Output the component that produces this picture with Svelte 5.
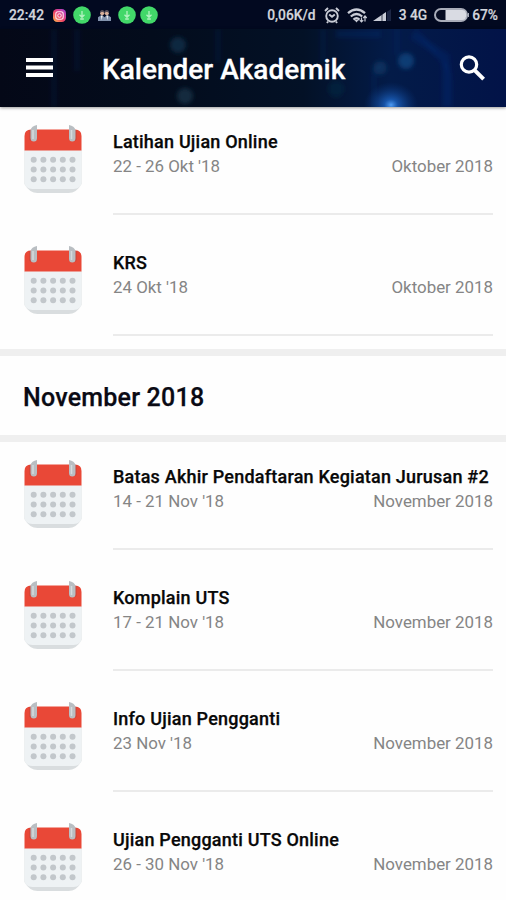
<script>
  const october = [
    { title: "Latihan Ujian Online", date: "22 - 26 Okt '18", month: "Oktober 2018" },
    { title: "KRS", date: "24 Okt '18", month: "Oktober 2018" },
  ];

  const november = [
    { title: "Batas Akhir Pendaftaran Kegiatan Jurusan #2", date: "14 - 21 Nov '18", month: "November 2018" },
    { title: "Komplain UTS", date: "17 - 21 Nov '18", month: "November 2018" },
    { title: "Info Ujian Pengganti", date: "23 Nov '18", month: "November 2018" },
    { title: "Ujian Pengganti UTS Online", date: "26 - 30 Nov '18", month: "November 2018" },
  ];

  const columns = [10.7, 20.4, 30.1, 39.8, 49.5];
  const lines = [34.8, 44.5, 54.2];
</script>

{#snippet download()}
  <svg class="download" width="18" height="18" viewBox="0 0 18 18">
    <circle cx="9" cy="9" r="8.8" fill="#42d869" />
    <path d="M9 5v6M6.5 8.8 9 11.3l2.5-2.5M7.2 13h3.6" fill="none" stroke="#b4f3c2" stroke-width="1.3" />
  </svg>
{/snippet}

{#snippet event(item)}
  <li class="event">
    <svg class="calendar" width="60" height="70" viewBox="0 0 60 70">
      <path d="M1.5 25h57v34q-5 9-13 9h-31q-8 0-13-9z" fill="#d9dddf" />
      <path d="M1.5 25h57v31q0 8-8 8h-41q-8 0-8-8z" fill="#eef2f4" />
      <path d="M1.5 25.5V11q0-6.5 6.5-6.5h44q6.5 0 6.500 6.5v14.5z" fill="#e94837" />
      <path d="M6.500 5h7v10q-3.500 2-7 0zM46.500 5h7v10q-3.500 2-7 0z" fill="#c5453b" />
      <path d="M7.500 5q1-4 6.500-5v13q0 3.500-3.200 3.500T7.500 13zM46 0q5.500 1 6.500 5v8q0 3.500-3.200 3.500T46 13z" fill="#b9bec2" />
      <path d="M10 5v9M48.500 5v9" stroke="#d5dadd" stroke-width="1.500" />
      {#each lines as y}
        {#each columns as x}
          <circle cx={x} cy={y} r="3" fill="#c2c7cb" />
        {/each}
      {/each}
    </svg>
    <div class="info">
      <h3>{item.title}</h3>
      <div class="meta">
        <span>{item.date}</span>
        <span>{item.month}</span>
      </div>
    </div>
  </li>
{/snippet}

<div class="screen">
  <div class="status">
    <span class="clock">22:42</span>
    <div class="notifications">
      <svg width="13" height="13" viewBox="0 0 14 14">
        <defs>
          <linearGradient id="insta" x1="0" y1="1" x2="1" y2="0">
            <stop offset="0" stop-color="#ffc04d" />
            <stop offset=".45" stop-color="#ee3e68" />
            <stop offset="1" stop-color="#a043dc" />
          </linearGradient>
        </defs>
        <rect width="14" height="14" rx="4.5" fill="url(#insta)" />
        <rect x="3" y="3" width="8" height="8" rx="2.3" fill="none" stroke="#ffe4ed" stroke-width="1.2" />
        <circle cx="7" cy="7" r="1.9" fill="none" stroke="#ffe4ed" stroke-width="1.1" />
      </svg>
      {@render download()}
      <svg class="people" width="13" height="13" viewBox="0 0 14 14">
        <path d="M0 13V9l3-2h2l2 2 2-2h2l3 2v4z" fill="#8292ad" />
        <path d="M3 7h2l-1 5zM9 7h2l-1 5z" fill="#f2f2f2" />
        <circle cx="4.5" cy="4.5" r="2.2" fill="#d9b09a" />
        <circle cx="9.5" cy="4.5" r="2.2" fill="#d9b09a" />
        <path d="M2.2 4q0-3 2.3-3t2.5 3L4.5 3zM7 4q0-3 2.5-3t2.3 3L9.5 3z" fill="#59505a" />
      </svg>
      {@render download()}
      {@render download()}
    </div>
    <span class="speed">0,06K/d</span>
    <svg class="alarm" width="16" height="17" viewBox="0 0 16 17" fill="none" stroke="#c9ccd6" stroke-width="1.9">
      <circle cx="8" cy="9" r="5.8" />
      <path d="m1 4 3-3M15 4l-3-3M5.2 7.5 8 9.8l2.8-2.3M4 14.5 3 16M12 14.5l1 1.5" />
    </svg>
    <svg class="wifi" width="21" height="15" viewBox="0 0 21 15" fill="none" stroke="#c9ccd6">
      <path d="M1 5.2q8.500-7.500 17 0M3.800 8.500q5.700-5 11.400 0M6.500 11.600q3-2.600 6 0" stroke-width="2.300" />
      <path d="m7.500 12 2 2.500 2-2.500z" fill="#c9ccd6" stroke="none" />
      <path d="M14.500 14V9.500m-1.700 2.700 1.700 1.800 1.700-1.800M18 13.500V8m-1.700 2L18 8l1.700 2" stroke-width="1.200" />
    </svg>
    <svg class="signal" width="18" height="13" viewBox="0 0 18 13">
      <path d="M14 2.700 18 0v12h-4z" fill="#1c2644" />
      <path d="M0 12 13 3V12z" fill="#c9ccd6" />
      <path d="M9 3v9" stroke="#020920" stroke-width=".7" />
    </svg>
    <span class="network">3 4G</span>
    <svg class="battery" width="35" height="14" viewBox="0 0 35 14">
      <rect x="1" y="1" width="32" height="12" rx="6" fill="#070d22" stroke="#a9adb9" stroke-width="2" />
      <path d="M11.500 2h17q3.700 0 3.700 5t-3.700 5h-17z" fill="#d9dbe3" />
      <path d="M34.400 5v4" stroke="#a9adb9" stroke-width="1.200" />
    </svg>
    <span class="percent">67%</span>
  </div>

  <header>
    <svg class="backdrop" viewBox="0 0 506 78" preserveAspectRatio="none">
      <defs>
        <linearGradient id="night">
          <stop offset="0" stop-color="#040817" />
          <stop offset=".3" stop-color="#030c1c" />
          <stop offset=".6" stop-color="#031126" />
          <stop offset=".77" stop-color="#031b48" />
          <stop offset="1" stop-color="#021348" />
        </linearGradient>
        <radialGradient id="glow">
          <stop offset="0" stop-color="#4e9cf5" />
          <stop offset=".25" stop-color="#1b60bd" stop-opacity=".8" />
          <stop offset="1" stop-color="#0a377e" stop-opacity="0" />
        </radialGradient>
        <filter id="soften" x="-10%" y="-10%" width="120%" height="120%"><feGaussianBlur stdDeviation="2" /></filter>
      </defs>
      <rect width="506" height="78" fill="url(#night)" />
      <g filter="url(#soften)">
        <path d="M54 0v78M77 0v42M218 0v34M323 0v34M374 78V48q0-10 10-12M415 0l27 32q8 8 8 19v27M397 0v26" fill="none" stroke="#0b388c" stroke-width="5" opacity=".15" />
        <path d="M336 5h45M412 6l34 22v50" fill="none" stroke="#103f99" stroke-width="8" opacity=".18" />
        <circle cx="178" cy="16" r="8" fill="#12344f" opacity=".7" />
        <circle cx="185" cy="67" r="8" fill="#193b50" opacity=".65" />
        <circle cx="380" cy="39" r="7" fill="#104170" opacity=".5" />
        <circle cx="406" cy="32" r="8" fill="#145291" opacity=".6" />
        <circle cx="336" cy="60" r="8" fill="#0d3048" opacity=".4" />
      </g>
      <ellipse cx="391" cy="76" rx="27" ry="23" fill="url(#glow)" />
    </svg>
    <svg class="menu" width="28" height="20" viewBox="0 0 28 20">
      <path d="M0 2h27M0 9.5h27M0 17h27" stroke="#fff" stroke-width="3.8" />
    </svg>
    <h1>Kalender Akademik</h1>
    <svg class="search" width="27" height="27" viewBox="0 0 27 27" fill="none" stroke="#fff">
      <circle cx="10" cy="9.5" r="7.7" stroke-width="3.2" />
      <path d="m15.8 15.3 8.8 8.8" stroke-width="4" />
    </svg>
  </header>

  <main>
    <ul>
      {#each october as item}
        {@render event(item)}
      {/each}
    </ul>
    <h2>November 2018</h2>
    <ul>
      {#each november as item}
        {@render event(item)}
      {/each}
    </ul>
  </main>
</div>

<style>
  :global(body) {
    margin: 0;
    background: #fefefe;
  }

  .screen {
    height: 900px;
    overflow: hidden;
    background: #fefefe;
    font-family: Roboto, sans-serif;
  }

  .status {
    display: flex;
    align-items: center;
    box-sizing: border-box;
    height: 29px;
    padding: 1px 8px 0 9px;
    background: #020920;
    color: #d3d5dc;
    font-size: 13.8px;
    font-weight: 500;
    white-space: nowrap;
    -webkit-text-stroke: 0.2px currentColor;
  }

  .notifications {
    display: flex;
    align-items: center;
    gap: 4.5px;
    margin-left: 9px;
  }

  .notifications .download:nth-child(2) {
    margin-left: 2px;
  }

  .people {
    margin: 0 2.5px;
  }

  .speed {
    margin-left: auto;
  }

  .alarm {
    margin-left: 8px;
  }

  .wifi {
    margin-left: 7px;
  }

  .signal {
    margin-left: 5px;
  }

  .network {
    margin-left: 8px;
  }

  .battery {
    margin-left: 7px;
  }

  .percent {
    margin-left: 3px;
  }

  header {
    position: relative;
    display: flex;
    align-items: center;
    box-sizing: border-box;
    height: 78px;
    padding: 0 20px 0 26px;
    color: #fff;
    box-shadow: 0 1px 3px rgba(0, 0, 0, 0.4);
  }

  .backdrop {
    position: absolute;
    inset: 0;
    width: 100%;
    height: 100%;
  }

  .menu,
  .search,
  h1 {
    position: relative;
  }

  h1 {
    margin: 4px 0 0 48px;
    font-size: 28px;
    font-weight: 500;
    line-height: 34px;
    -webkit-text-stroke: 0.3px currentColor;
  }

  .search {
    margin-left: auto;
  }

  ul {
    margin: 0;
    padding: 0;
    list-style: none;
  }

  .event {
    display: flex;
    box-sizing: border-box;
    height: 121px;
    padding: 17px 13px 13px 23px;
  }

  .calendar {
    flex: none;
    margin-top: 1px;
  }

  .info {
    flex: 1;
    margin-left: 30px;
    padding-top: 6px;
    border-bottom: 2px solid #ebebeb;
  }

  h3 {
    margin: 0;
    color: #080808;
    font-size: 18px;
    font-weight: 500;
    line-height: 24px;
    letter-spacing: 0.21px;
    white-space: nowrap;
    -webkit-text-stroke: 0.25px currentColor;
  }

  .meta {
    display: flex;
    justify-content: space-between;
    color: #858585;
    font-size: 16.9px;
    line-height: 24px;
  }

  h2 {
    box-sizing: border-box;
    height: 93px;
    margin: 0;
    padding: 2px 23px 0;
    border: solid #efefef;
    border-width: 7px 0;
    color: #0a0a14;
    font-size: 25px;
    font-weight: 500;
    line-height: 79px;
    letter-spacing: 0.22px;
    -webkit-text-stroke: 0.25px currentColor;
  }
</style>
